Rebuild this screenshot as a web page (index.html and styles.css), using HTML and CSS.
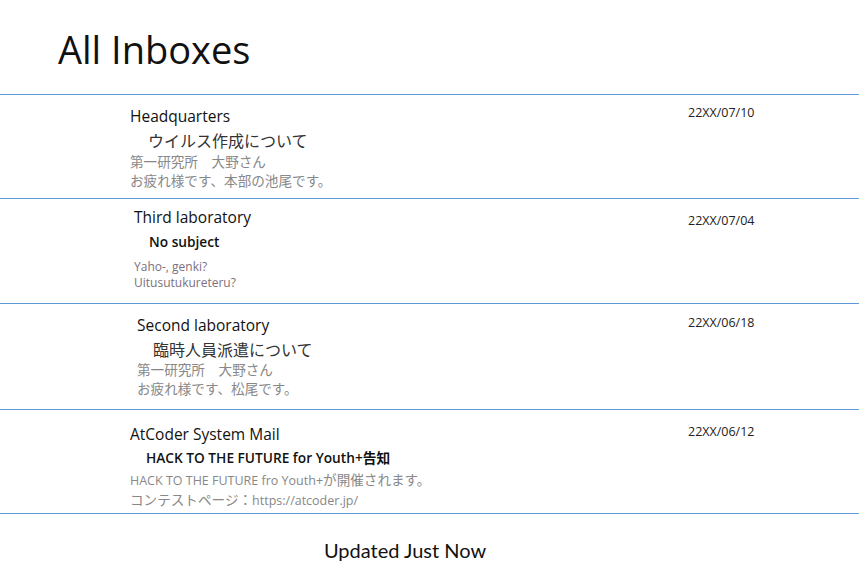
FILE: index.html
```html
<!DOCTYPE html>
<html lang="ja">
<head>
<meta charset="utf-8">
<title>All Inboxes</title>
<link rel="stylesheet" href="styles.css">
</head>
<body>
<h1 class="title">All Inboxes</h1>
<ul class="list">
  <li class="mail mail-1">
    <div class="body">
      <div class="sender">Headquarters</div>
      <div class="subject jp">ウイルス作成について</div>
      <div class="preview jp">第一研究所　大野さん<br>お疲れ様です、本部の池尾です。</div>
    </div>
    <div class="date">22XX/07/10</div>
  </li>
  <li class="mail mail-2">
    <div class="body">
      <div class="sender">Third laboratory</div>
      <div class="subject bold">No subject</div>
      <div class="preview latin">Yaho-, genki?<br>Uitusutukureteru?</div>
    </div>
    <div class="date">22XX/07/04</div>
  </li>
  <li class="mail mail-3">
    <div class="body">
      <div class="sender">Second laboratory</div>
      <div class="subject jp">臨時人員派遣について</div>
      <div class="preview jp">第一研究所　大野さん<br>お疲れ様です、松尾です。</div>
    </div>
    <div class="date">22XX/06/18</div>
  </li>
  <li class="mail mail-4">
    <div class="body">
      <div class="sender">AtCoder System Mail</div>
      <div class="subject bold">HACK TO THE FUTURE for Youth+告知</div>
      <div class="preview jp"><span class="latin-in">HACK TO THE FUTURE fro Youth+</span>が開催されます。<br>コンテストページ：<span class="latin-in">https://atcoder.jp/</span></div>
    </div>
    <div class="date">22XX/06/12</div>
  </li>
</ul>
<div class="footer">Updated Just Now</div>
</body>
</html>
```
FILE: styles.css
```css
html, body {
  margin: 0;
  padding: 0;
  background: #ffffff;
}
body {
  width: 860px;
  font-family: "Open Sans", "Noto Sans CJK JP", sans-serif;
  color: #1a1a1a;
}
.title {
  margin: 0;
  height: 94px;
  box-sizing: border-box;
  padding: 25px 0 0 58px;
  font-family: "Open Sans", sans-serif;
  font-weight: 400;
  font-size: 38px;
  line-height: 48px;
  color: #111;
}
.list {
  list-style: none;
  margin: 0;
  padding: 0;
  width: 859px;
  border-top: 1px solid #5b9bd5;
}
.mail {
  display: flex;
  box-sizing: border-box;
  border-bottom: 1px solid #5b9bd5;
}
.body {
  flex: 1;
  display: flex;
  flex-direction: column;
}
.date {
  width: 171px;
  font-family: "Open Sans", sans-serif;
  font-size: 12.5px;
  line-height: 14px;
  color: #222;
}
.sender {
  font-family: "Open Sans", sans-serif;
  font-size: 15.5px;
  line-height: 20px;
  color: #111;
}
.subject {
  color: #333;
}
.subject.jp {
  font-family: "Noto Sans CJK JP", sans-serif;
  font-size: 16px;
  line-height: 22px;
}
.subject.bold {
  font-family: "Open Sans", "Noto Sans CJK JP", sans-serif;
  font-weight: 600;
  font-size: 13.7px;
  line-height: 20px;
  color: #111;
}
.preview {
  color: #888;
}
.preview.jp {
  font-family: "Noto Sans CJK JP", sans-serif;
  font-size: 13.6px;
  line-height: 19px;
}
.preview.latin {
  font-family: "Open Sans", sans-serif;
  font-size: 12px;
  line-height: 16px;
  color: #7d707d;
}
.latin-in {
  font-family: "Open Sans", sans-serif;
  font-size: 12.5px;
}

.mail-1 { height: 104px; }
.mail-1 .body { padding: 11px 0 0 130px; }
.mail-1 .subject { padding-left: 18px; margin-top: 3px; }
.mail-1 .preview { margin-top: 1px; }
.mail-1 .date { padding-top: 11px; }

.mail-2 { height: 105px; }
.mail-2 .body { padding: 8px 0 0 134px; }
.mail-2 .subject { padding-left: 15px; margin-top: 5px; }
.mail-2 .preview { margin-top: 7px; }
.mail-2 .date { padding-top: 15px; }

.mail-3 { height: 106px; }
.mail-3 .body { padding: 11px 0 0 137px; }
.mail-3 .subject { padding-left: 16px; margin-top: 3px; }
.mail-3 .preview { margin-top: 0; }
.mail-3 .date { padding-top: 12px; }

.mail-4 { height: 104px; }
.mail-4 .body { padding: 14px 0 0 130px; }
.mail-4 .subject { padding-left: 16px; margin-top: 4px; }
.mail-4 .preview { margin-top: 2px; }
.mail-4 .date { padding-top: 15px; }

.footer {
  text-align: center;
  padding-top: 23px;
  padding-right: 50px;
  font-family: "Lato", sans-serif;
  font-size: 20px;
  line-height: 26px;
  color: #111;
}
```
